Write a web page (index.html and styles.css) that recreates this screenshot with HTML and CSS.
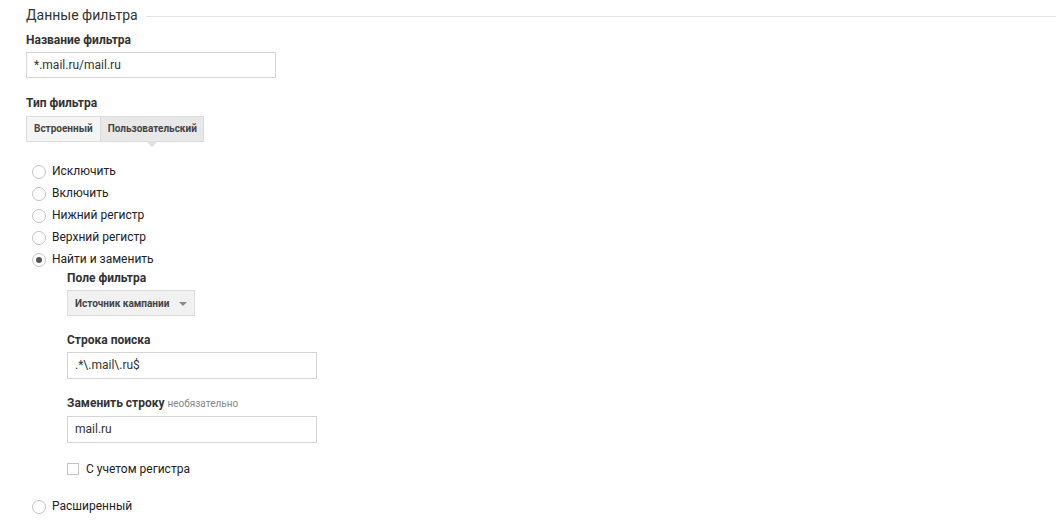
FILE: index.html
```html
<!DOCTYPE html>
<html lang="ru">
<head>
  <meta charset="UTF-8">
  <title>Данные фильтра</title>
  <link rel="stylesheet" href="styles.css">
</head>
<body>
  <section class="filter">
    <div class="legend">
      <span>Данные фильтра</span>
      <span class="rule"></span>
    </div>

    <label class="label">Название фильтра</label>
    <div class="input wide">*.mail.ru/mail.ru</div>

    <label class="label type-label">Тип фильтра</label>
    <div class="tabs">
      <span class="tab">Встроенный</span>
      <span class="tab active">Пользовательский</span>
    </div>

    <ul class="options">
      <li><span class="radio"></span>Исключить</li>
      <li><span class="radio"></span>Включить</li>
      <li><span class="radio"></span>Нижний регистр</li>
      <li><span class="radio"></span>Верхний регистр</li>
      <li><span class="radio checked"></span>Найти и заменить</li>
    </ul>

    <div class="replace">
      <label class="label">Поле фильтра</label>
      <div class="select">Источник кампании <span class="caret"></span></div>

      <label class="label">Строка поиска</label>
      <div class="input">.*\.mail\.ru$</div>

      <label class="label">Заменить строку <span class="hint">необязательно</span></label>
      <div class="input">mail.ru</div>

      <div class="check"><span class="box"></span>С учетом регистра</div>
    </div>

    <ul class="options last">
      <li><span class="radio"></span>Расширенный</li>
    </ul>
  </section>
</body>
</html>
```

FILE: styles.css
```css
/* Page */
body {
  margin: 0;
  background: #fff;
  font-family: Roboto, "Liberation Sans", Arial, sans-serif;
  color: #222;
}

.filter {
  padding: 5px 0 0 26px;
}

/* Section title with rule */
.legend {
  display: flex;
  align-items: center;
  gap: 8px;
  font-size: 14px;
  color: #333;
  height: 20px;
}

.legend .rule {
  flex: 1;
  border-top: 1px solid #e5e5e5;
  margin-top: 2px;
}

/* Field labels */
.label {
  display: block;
  font-size: 12px;
  font-weight: bold;
  color: #333;
  margin-top: 8px;
  line-height: 14px;
}

.type-label {
  margin-top: 18px;
}

.hint {
  font-size: 10px;
  font-weight: normal;
  color: #888;
}

/* Text inputs */
.input {
  box-sizing: border-box;
  width: 250px;
  height: 27px;
  margin-top: 5px;
  padding: 0 7px;
  border: 1px solid #d5d5d5;
  font-size: 12px;
  line-height: 25px;
  color: #333;
}

.input.wide {
  width: 250px;
  height: 26px;
  line-height: 24px;
}

/* Built-in / custom switch */
.tabs {
  display: flex;
  margin-top: 6px;
}

.tab {
  position: relative;
  box-sizing: border-box;
  height: 26px;
  padding: 0 7px;
  border: 1px solid #dcdcdc;
  background: #f5f5f5;
  font-size: 10px;
  font-weight: bold;
  line-height: 24px;
  color: #444;
}

.tab + .tab {
  border-left: 0;
  padding: 0 6px 0 7px;
}

.tab.active {
  background: #e8e8e8;
}

.tab.active::after {
  content: "";
  position: absolute;
  left: 50%;
  bottom: -6px;
  margin-left: -6px;
  border: 6px solid transparent;
  border-bottom: 0;
  border-top-color: #e0e0e0;
}

/* Radio list */
.options {
  list-style: none;
  margin: 18px 0 0 0;
  padding: 0 0 0 6px;
}

.options li {
  display: flex;
  align-items: center;
  height: 22px;
  font-size: 12px;
  color: #222;
}

.options.last {
  margin-top: 19px;
}

.radio {
  box-sizing: border-box;
  width: 14px;
  height: 14px;
  margin: 2px 6px 0 0;
  border: 1px solid #c4c4c4;
  border-radius: 50%;
  display: flex;
  align-items: center;
  justify-content: center;
}

.radio.checked::before {
  content: "";
  width: 6px;
  height: 6px;
  border-radius: 50%;
  background: #555;
}

/* Find and replace block */
.replace {
  padding-left: 41px;
}

.replace .label:first-child {
  margin-top: 1px;
}

.replace .label {
  margin-top: 17px;
}

.select {
  display: inline-flex;
  align-items: center;
  box-sizing: border-box;
  height: 26px;
  margin-top: 5px;
  padding: 0 7px;
  border: 1px solid #dcdcdc;
  background: #f1f1f1;
  font-size: 10px;
  font-weight: bold;
  color: #444;
  width: 128px;
}

.caret {
  margin-left: auto;
  border: 4px solid transparent;
  border-bottom: 0;
  border-top-color: #888;
  margin-top: 2px;
}

.check {
  display: flex;
  align-items: center;
  margin-top: 19px;
  font-size: 12px;
  color: #222;
}

.box {
  box-sizing: border-box;
  width: 12px;
  height: 12px;
  border: 1px solid #c4c4c4;
  margin-right: 7px;
}
```
